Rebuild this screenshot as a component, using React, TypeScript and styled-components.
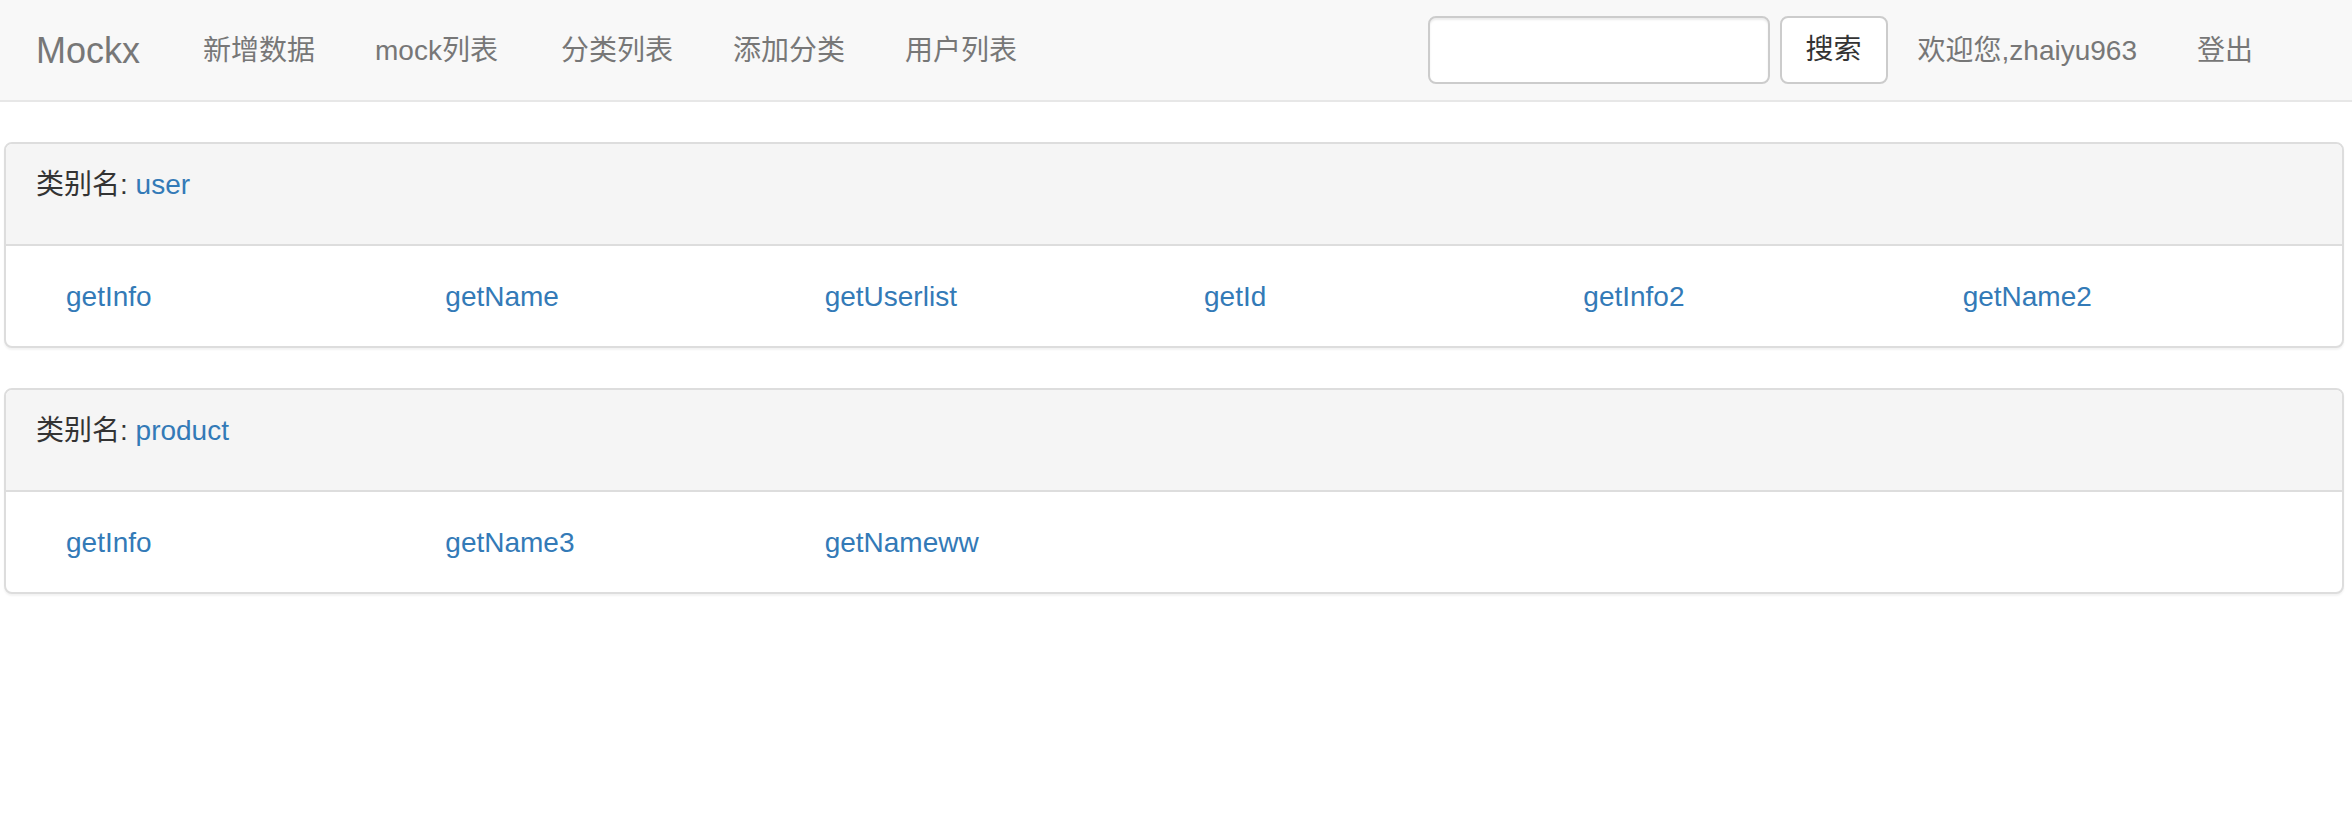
import React from "react";
import styled, { createGlobalStyle } from "styled-components";

const GlobalStyle = createGlobalStyle`
  * { box-sizing: border-box; }
  html, body { margin: 0; padding: 0; background: #fff; }
  body {
    font-family: "Liberation Sans", "Noto Sans CJK SC", sans-serif;
    font-size: 28px;
    line-height: 40px;
    color: #333;
  }
`;

const Navbar = styled.nav`
  display: flex;
  align-items: center;
  height: 102px;
  background: #f8f8f8;
  border-bottom: 2px solid #e7e7e7;
  padding: 0 69px 0 6px;
  margin-bottom: 40px;
`;

const Brand = styled.a`
  display: block;
  padding: 31px 33px 29px 30px;
  height: 100px;
  font-size: 36px;
  line-height: 40px;
  color: #777;
  text-decoration: none;
`;

const NavList = styled.ul`
  display: flex;
  list-style: none;
  margin: 0;
  padding: 0;
`;

const NavLink = styled.a<{ $extra?: number }>`
  display: block;
  padding: 31px ${(p) => 30 + (p.$extra ?? 0)}px 29px 30px;
  line-height: 40px;
  color: #777;
  text-decoration: none;
  white-space: nowrap;
`;

const RightGroup = styled.div`
  display: flex;
  align-items: center;
  margin-left: auto;
`;

const SearchForm = styled.form`
  display: flex;
  align-items: center;
  gap: 10px;
  margin: 0;
`;

const SearchInput = styled.input`
  width: 342px;
  height: 68px;
  border: 2px solid #ccc;
  border-radius: 8px;
  background: #fff;
  box-shadow: inset 0 2px 2px rgba(0, 0, 0, 0.075);
  padding: 12px 24px;
  font: inherit;
  outline: none;
`;

const SearchButton = styled.button`
  height: 68px;
  padding: 12px 24px;
  border: 2px solid #ccc;
  border-radius: 8px;
  background: #fff;
  color: #333;
  font-family: inherit;
  font-size: 28px;
  line-height: 40px;
  cursor: pointer;
`;

const Main = styled.main`
  padding: 0 8px 0 4px;
`;

const Panel = styled.section`
  border: 2px solid #ddd;
  border-radius: 8px;
  background: #fff;
  box-shadow: 0 2px 2px rgba(0, 0, 0, 0.05);
  margin-bottom: 40px;
`;

const PanelHeading = styled.header`
  background: #f5f5f5;
  border-bottom: 2px solid #ddd;
  border-radius: 6px 6px 0 0;
  padding: 20px 30px 19px;
`;

const HeadingText = styled.div`
  line-height: 40px;
  margin-top: 1px;
  margin-bottom: 20px;
  color: #333;
`;

const Link = styled.a`
  color: #337ab7;
  text-decoration: none;
`;

const PanelBody = styled.div`
  display: flex;
  padding: 31px 30px 29px;
`;

const Col = styled.div`
  flex: 0 0 16.6667%;
  padding-left: 30px;
  line-height: 40px;
`;

const navItems: { label: string; extra?: number }[] = [
  { label: "新增数据" },
  { label: "mock列表", extra: 3 },
  { label: "分类列表" },
  { label: "添加分类" },
  { label: "用户列表" },
];

const categories = [
  { name: "user", items: ["getInfo", "getName", "getUserlist", "getId", "getInfo2", "getName2"] },
  { name: "product", items: ["getInfo", "getName3", "getNameww"] },
];

export default function App() {
  return (
    <>
      <GlobalStyle />
      <Navbar>
        <Brand href="#">Mockx</Brand>
        <NavList>
          {navItems.map((t) => (
            <li key={t.label}>
              <NavLink href="#" $extra={t.extra}>
                {t.label}
              </NavLink>
            </li>
          ))}
        </NavList>
        <RightGroup>
          <SearchForm onSubmit={(e) => e.preventDefault()}>
            <SearchInput type="text" />
            <SearchButton type="submit">搜索</SearchButton>
          </SearchForm>
          <NavList>
            <li>
              <NavLink href="#">欢迎您,zhaiyu963</NavLink>
            </li>
            <li>
              <NavLink href="#">登出</NavLink>
            </li>
          </NavList>
        </RightGroup>
      </Navbar>
      <Main>
        {categories.map((c) => (
          <Panel key={c.name}>
            <PanelHeading>
              <HeadingText>
                类别名: <Link href="#">{c.name}</Link>
              </HeadingText>
            </PanelHeading>
            <PanelBody>
              {c.items.map((it) => (
                <Col key={it}>
                  <Link href="#">{it}</Link>
                </Col>
              ))}
            </PanelBody>
          </Panel>
        ))}
      </Main>
    </>
  );
}
